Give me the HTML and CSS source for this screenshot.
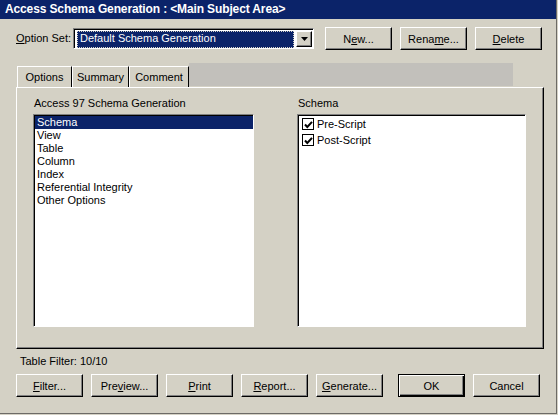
FILE: index.html
```html
<!DOCTYPE html>
<html lang="en">
<head>
  <meta charset="UTF-8">
  <title>Access Schema Generation</title>
  <link rel="stylesheet" href="styles.css">
</head>
<body>
  <div class="window">
    <div class="titlebar">Access Schema Generation : &lt;Main Subject Area&gt;</div>
    <div class="content">
      <div class="option-row">
        <span class="option-label"><u>O</u>ption Set:</span>
        <div class="combo">
          <div class="combo-value"><span>Default Schema Generation</span></div>
          <div class="combo-btn">
            <svg width="7" height="4" viewBox="0 0 7 4"><path d="M0 0H7L3.5 4Z" fill="#000"/></svg>
          </div>
        </div>
        <div class="top-buttons">
          <button class="btn">N<u>e</u>w...</button>
          <button class="btn">Rena<u>m</u>e...</button>
          <button class="btn"><u>D</u>elete</button>
        </div>
      </div>

      <div class="tab-strip">
        <div class="tab active options">Options</div>
        <div class="tab summary">Summary</div>
        <div class="tab comment">Comment</div>
        <div class="tab-fill"></div>
      </div>

      <div class="panel">
        <div class="group left">
          <div class="group-label">Access 97 Schema Generation</div>
          <ul class="listbox">
            <li class="selected">Schema</li>
            <li>View</li>
            <li>Table</li>
            <li>Column</li>
            <li>Index</li>
            <li>Referential Integrity</li>
            <li>Other Options</li>
          </ul>
        </div>
        <div class="group right">
          <div class="group-label">Schema</div>
          <ul class="listbox checks">
            <li><span class="check"><svg width="9" height="9" viewBox="0 0 9 9"><path d="M1 4.5L3.3 7L8 1.8" fill="none" stroke="#000" stroke-width="2"/></svg></span>Pre-Script</li>
            <li><span class="check"><svg width="9" height="9" viewBox="0 0 9 9"><path d="M1 4.5L3.3 7L8 1.8" fill="none" stroke="#000" stroke-width="2"/></svg></span>Post-Script</li>
          </ul>
        </div>
      </div>

      <div class="status">Table Filter: 10/10</div>

      <div class="button-row">
        <button class="btn"><u>F</u>ilter...</button>
        <button class="btn">Pre<u>v</u>iew...</button>
        <button class="btn"><u>P</u>rint</button>
        <button class="btn"><u>R</u>eport...</button>
        <button class="btn"><u>G</u>enerate...</button>
        <button class="btn default">OK</button>
        <button class="btn">Cancel</button>
      </div>
    </div>
  </div>
</body>
</html>
```

FILE: styles.css
```css
body {
  margin: 0;
  background: #d4d1c5;
  font-family: "Liberation Sans", Arial, sans-serif;
  font-size: 11px;
  color: #000;
}
.window {
  width: 556px;
  height: 413px;
  background: #d4d1c5;
  border-right: 1px solid #6c6a66;
  border-bottom: 1px solid #6c6a66;
}
.titlebar {
  height: 19px;
  line-height: 19px;
  padding-left: 5px;
  background: #0b2369;
  color: #fff;
  font-weight: bold;
  font-size: 12px;
  letter-spacing: -0.13px;
  white-space: nowrap;
}
.content {
  padding: 8px 0 0 16px;
}
.option-row {
  display: flex;
  align-items: center;
  height: 23px;
}
.option-label {
  width: 57px;
  line-height: 13px;
}
.combo {
  display: flex;
  align-items: center;
  width: 237px;
  height: 17px;
  padding: 1px;
  background: #fff;
  border: 1px solid;
  border-color: #808080 #fff #fff #808080;
  box-shadow: inset 1px 1px #000;
}
.combo-value {
  flex: 1;
  height: 15px;
  margin: 1px 1px 0 2px;
  background: #0b2369;
  color: #fff;
  border: 1px dotted #d4d1c5;
  line-height: 13px;
  padding-left: 2px;
}
.combo-btn {
  width: 14px;
  height: 14px;
  margin: 1px 0 0 1px;
  background: #d4d1c5;
  border: 1px solid;
  border-color: #fff #000 #000 #fff;
  box-shadow: inset -1px -1px #808080;
  display: flex;
  align-items: center;
  justify-content: center;
}
.top-buttons {
  display: flex;
  gap: 8px;
  margin-left: 11px;
}
.btn {
  width: 67px;
  height: 23px;
  padding: 0;
  background: #d4d1c5;
  border: 1px solid;
  border-color: #fff #000 #000 #fff;
  box-shadow: inset -1px -1px #808080;
  font-family: "Liberation Sans", Arial, sans-serif;
  font-size: 11px;
  color: #000;
}
.btn.default {
  border-color: #000;
  box-shadow: inset 1px 1px #fff, inset -1px -1px #000, inset -2px -2px #808080;
}
.tab-strip {
  display: flex;
  align-items: flex-end;
  height: 24px;
  margin-top: 13px;
  padding-left: 1px;
}
.tab {
  box-sizing: border-box;
  height: 21px;
  line-height: 20px;
  text-align: center;
  border-top: 1px solid #fff;
  border-left: 1px solid #fff;
  border-right: 1px solid #000;
}
.tab.options { width: 55px; }
.tab.summary { width: 57px; }
.tab.comment { width: 60px; }
.tab-fill {
  align-self: stretch;
  width: 324px;
  height: 23px;
  background: #c2c0bb;
}
.panel {
  display: flex;
  width: 493px;
  height: 241px;
  padding: 9px 17px 10px 16px;
  border: 1px solid;
  border-color: #fff #000 #000 #fff;
  box-shadow: inset -1px -1px #808080;
}
.group-label {
  line-height: 13px;
  margin-bottom: 4px;
  padding-left: 1px;
}
.group.left .listbox {
  width: 218px;
}
.group.right {
  margin-left: 43px;
}
.group.right .listbox {
  width: 226px;
}
.listbox {
  list-style: none;
  margin: 0;
  height: 210px;
  background: #fff;
  border: 1px solid;
  border-color: #808080 #fff #fff #808080;
  box-shadow: inset 1px 1px #000;
  padding: 1px 0 0 1px;
}
.listbox li {
  height: 13px;
  line-height: 13px;
  padding-left: 2px;
  white-space: nowrap;
}
.listbox li.selected {
  background: #0b2369;
  color: #fff;
}
.listbox.checks li {
  height: 16px;
  line-height: 16px;
  display: flex;
  align-items: center;
}
.check {
  width: 10px;
  height: 10px;
  margin: 0 3px 0 1px;
  border: 1px solid #000;
  background: #fff;
  display: flex;
  align-items: center;
  justify-content: center;
}
.status {
  line-height: 13px;
  margin-top: 6px;
  padding-left: 4px;
}
.button-row {
  display: flex;
  gap: 8px;
  margin-top: 6px;
}
.button-row .default {
  margin-left: 7px;
}
```
